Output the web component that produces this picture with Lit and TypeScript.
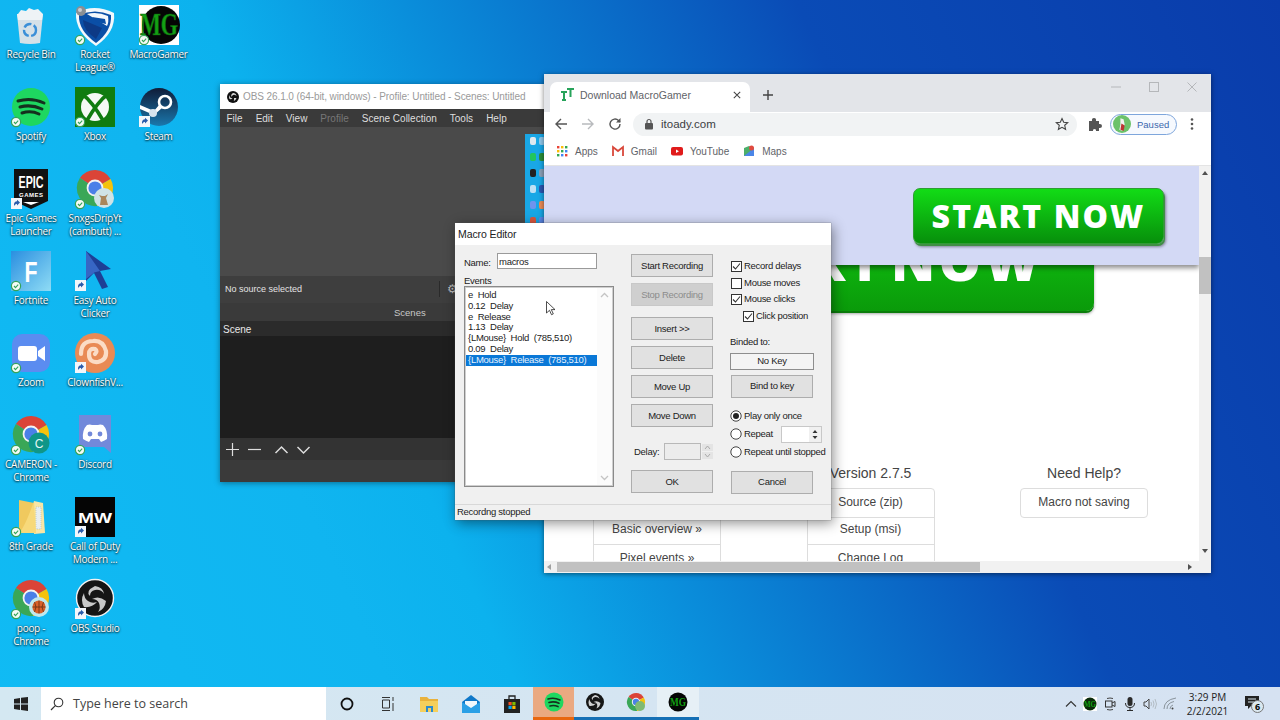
import { LitElement, html, css, svg } from 'lit';
import { customElement } from 'lit/decorators.js';

// overlays that windows puts on desktop icons
const check = () => svg`
  <circle cx="5" cy="35" r="4.6" fill="#f4fbf6" stroke="#35a35a" stroke-width="1.2"/>
  <path d="M3 35l1.500 1.600L7.200 33.600" fill="none" stroke="#35a35a" stroke-width="1.100"/>`;
const shortcut = () => svg`
  <rect x="0" y="29" width="11" height="11" fill="#f3f6fa"/>
  <path d="M3 38v-2.500q0-3 3-3.200V30.800l3 2.800-3 2.800v-1.700q-2 .2-3 2.300z" fill="#2a5cab"/>`;

const chrome = (extra: unknown) => svg`
  <g transform="translate(1 0)">
    <path d="M19 19L3.900 9A18 18 0 0 1 34.600 10z" fill="#db4437"/>
    <path d="M19 19L34.600 10A18 18 0 0 1 21 37z" fill="#f4c20d"/>
    <path d="M19 19L21 37A18 18 0 0 1 3.900 9z" fill="#3aa757"/>
    <circle cx="19" cy="19" r="8.400" fill="#f3f3f3"/>
    <circle cx="19" cy="19" r="6.600" fill="#4a80e8"/>
  </g>
  ${extra}`;

const ICONS: Record<string, () => unknown> = {
  bin: () => svg`
    <path d="M7 9l3-4 5 1 3-3 5 2 4-1 5 5-25 0z" fill="#eef3f6"/>
    <path d="M6 9l26 0-3 29q-10 2-20 0z" fill="#d5e1e8"/>
    <path d="M6 9l26 0-1 6-24 0z" fill="#eef3f6"/>
    <circle cx="19" cy="25" r="6" fill="none" stroke="#3a8fd8" stroke-width="2.400" stroke-dasharray="8 2.500"/>`,
  rocket: () => svg`
    <path d="M1 8q18-10 38 0 2 19-18 33Q0 27 1 8z" fill="#f4f8fb"/>
    <path d="M4 10q16-7 32 0 1 16-15 28Q3 25 4 10z" fill="#0b4fa6"/>
    <path d="M12 9q10-3 21 2 1 6-1 10L22 15z" fill="#f4f8fb"/>
    <path d="M8 15l19 8-6 11Q8 25 8 15z" fill="#0d3a86"/>
    <path d="M17 12l13 2 1 5-9-2z" fill="#0b4fa6"/>
    <circle cx="6" cy="6" r="5" fill="#8a8f94"/>
    <circle cx="5" cy="5" r="2" fill="#c9ccd0"/>
    ${check()}`,
  mg: () => svg`
    <rect width="40" height="40" fill="#fff"/>
    <circle cx="22" cy="20" r="19" fill="#050505"/>
    <text x="20" y="30" text-anchor="middle" font-family="Liberation Serif" font-weight="700" font-size="31" fill="#14a014" stroke="#0b5f0b" stroke-width=".7" textLength="38" lengthAdjust="spacingAndGlyphs">MG</text>
    ${check()}`,
  spotify: () => svg`
    <circle cx="20" cy="20" r="19" fill="#1ed760"/>
    <path d="M7 14q13-4 26 2M9 20q11-3 22 2M11 26q9-3 17 1" fill="none" stroke="#15301e" stroke-width="3" stroke-linecap="round"/>
    ${check()}`,
  xbox: () => svg`
    <rect width="40" height="40" fill="#107c10"/>
    <circle cx="20" cy="20" r="14" fill="#f5f9f5"/>
    <path d="M7 7Q17 14 29 35M33 7Q23 14 11 35" fill="none" stroke="#107c10" stroke-width="3.600"/>
    ${check()}`,
  steam: () => svg`
    <defs><linearGradient id="st" x1="0" y1="0" x2="0" y2="1"><stop offset="0" stop-color="#101c38"/><stop offset="1" stop-color="#1a78ad"/></linearGradient></defs>
    <circle cx="20" cy="20" r="19" fill="url(#st)"/>
    <circle cx="26" cy="15" r="6" fill="none" stroke="#fff" stroke-width="2.600"/>
    <path d="M1 22l14 6 8-7-3-3-5 6-14-6z" fill="#fff"/>
    <circle cx="14" cy="26" r="4" fill="#d7e4ee"/>
    ${shortcut()}`,
  epic: () => svg`
    <path d="M3 0h34v32L20 40 3 32z" fill="#111"/>
    <text x="20" y="19" text-anchor="middle" font-family="Liberation Sans" font-weight="700" font-size="17" fill="#fff" textLength="25" lengthAdjust="spacingAndGlyphs">EPIC</text>
    <text x="20" y="28" text-anchor="middle" font-family="Liberation Sans" font-weight="700" font-size="6" fill="#fff" textLength="24">GAMES</text>
    <path d="M12 33h16l-8 3z" fill="#fff"/>
    ${shortcut()}`,
  chromeDog: () => chrome(svg`
    <circle cx="29" cy="29" r="10" fill="#cfe3e6"/>
    <path d="M25 36l1-7-2-3 3 1 3 0 3-2-2 4 2 7z" fill="#a9865c"/>
    ${check()}`),
  fortnite: () => svg`
    <defs><linearGradient id="fn" x1="0" y1="0" x2="1" y2="1"><stop offset="0" stop-color="#2a8fe0"/><stop offset="1" stop-color="#8fdcf5"/></linearGradient></defs>
    <rect width="40" height="40" fill="url(#fn)"/>
    <text x="20" y="31" text-anchor="middle" font-family="Liberation Sans" font-weight="700" font-size="30" fill="#fff" textLength="13" lengthAdjust="spacingAndGlyphs">F</text>
    ${check()}`,
  clicker: () => svg`
    <path d="M11 0l25 18-11 2 8 16-6 2-8-16-8 8z" fill="#1e3f95"/>
    <path d="M11 0l14 20-8 2 3-1-9 7z" fill="#3766c4"/>
    ${shortcut()}`,
  zoom: () => svg`
    <rect x="1" y="1" width="38" height="38" rx="10" fill="#5b8cf0"/>
    <rect x="7" y="13" width="19" height="15" rx="3" fill="#fff"/>
    <path d="M27 18l7-5v15l-7-5z" fill="#fff"/>
    ${check()}`,
  clownfish: () => svg`
    <circle cx="20" cy="20" r="20" fill="#e98a55"/>
    <path d="M20 21q3-3 0-5-6-1-6 5 0 9 9 8 9-2 8-11-3-11-13-10Q6 8 6 21" fill="none" stroke="#fbdcc6" stroke-width="4.200" stroke-linecap="round"/>
    ${shortcut()}`,
  chromeC: () => chrome(svg`
    <circle cx="28" cy="28" r="10.500" fill="#0f9688"/>
    <text x="28" y="32.500" text-anchor="middle" font-family="Liberation Sans" font-size="12" fill="#e6f6f3">C</text>
    ${check()}`),
  discord: () => svg`
    <path d="M4 0h32v38l-7-6H4z" fill="#7289da"/>
    <path d="M8 24q-1-9 4-14 3-1 5 0h6q2-1 5 0 5 5 4 14-3 2-6 3l-2-3h-8l-2 3q-3-1-6-3z" fill="#fff"/>
    <circle cx="15" cy="19" r="2.400" fill="#7289da"/><circle cx="25" cy="19" r="2.400" fill="#7289da"/>
    ${check()}`,
  folder: () => svg`
    <path d="M8 3l15 3v30l-15 0z" fill="#f0c95e"/>
    <path d="M23 4l9 2 2 30-11 1z" fill="#f8e6a6"/>
    <path d="M25 10h5v22h-5z" fill="#e8eef0" stroke="#9bb0b8" stroke-width=".5" stroke-dasharray="1 1"/>
    <path d="M8 36q6-6 15-32l2 32z" fill="#f7d97a"/>
    ${check()}`,
  mw: () => svg`
    <rect width="40" height="40" fill="#050505"/>
    <text x="20" y="26" text-anchor="middle" font-family="Liberation Sans" font-weight="700" font-size="15" fill="#fff" textLength="34" lengthAdjust="spacingAndGlyphs">MW</text>
    ${shortcut()}`,
  chromeBall: () => chrome(svg`
    <circle cx="28" cy="28" r="10" fill="#bfe8ee"/>
    <circle cx="28" cy="28" r="6.600" fill="#d9622b"/>
    <path d="M28 21.500v13M21.500 28h13M23.500 23q3 5 0 10M32.500 23q-3 5 0 10" fill="none" stroke="#5a2a10" stroke-width=".7"/>
    ${check()}`),
  obs: () => svg`
    <circle cx="20" cy="19" r="18.500" fill="#151515" stroke="#f2f2f2" stroke-width="1.400"/>
    <path d="M20 7q8 1 9 8-3-5-9-4-5 1-5 6-5-5 5-10zM31 22q-1 8-8 11 3-4 1-9-2-4-7-4 7-4 14 2zM9 28q-4-7 0-14 0 5 4 8 4 3 9 1-5 6-13 5z" fill="#c8c8c8"/>
    ${shortcut()}`,
};

const DESKTOP: { icon: string; label: string[] }[] = [
  { icon: 'bin', label: ['Recycle Bin'] },
  { icon: 'spotify', label: ['Spotify'] },
  { icon: 'epic', label: ['Epic Games', 'Launcher'] },
  { icon: 'fortnite', label: ['Fortnite'] },
  { icon: 'zoom', label: ['Zoom'] },
  { icon: 'chromeC', label: ['CAMERON -', 'Chrome'] },
  { icon: 'folder', label: ['8th Grade'] },
  { icon: 'chromeBall', label: ['poop -', 'Chrome'] },
  { icon: 'rocket', label: ['Rocket', 'League®'] },
  { icon: 'xbox', label: ['Xbox'] },
  { icon: 'chromeDog', label: ['SnxgsDripYt', '(cambutt) ...'] },
  { icon: 'clicker', label: ['Easy Auto', 'Clicker'] },
  { icon: 'clownfish', label: ['ClownfishV...'] },
  { icon: 'discord', label: ['Discord'] },
  { icon: 'mw', label: ['Call of Duty', 'Modern ...'] },
  { icon: 'obs', label: ['OBS Studio'] },
  { icon: 'mg', label: ['MacroGamer'] },
  { icon: 'steam', label: ['Steam'] },
];

const EVENTS = ['e  Hold', '0.12  Delay', 'e  Release', '1.13  Delay', '{LMouse}  Hold  (785,510)', '0.09  Delay', '{LMouse}  Release  (785,510)'];

// mini desktop that the OBS preview is showing, two columns per row
const MINI = ['#dfe9f0', '#8fc7ea', '#22c55e', '#2a8f3a', '#222', '#8aa0b8', '#bfe0f5', '#2a56b0', '#6f94ee', '#e98a55', '#d9573f', '#5b8cf0'];

@customElement('app-root')
export class AppRoot extends LitElement {
  static styles = css`
    :host {
      display: block;
      width: 1280px;
      height: 720px;
      overflow: hidden;
      font-family: 'Liberation Sans', Arial, sans-serif;
    }
    .desktop {
      position: relative;
      width: 1280px;
      height: 720px;
      overflow: hidden;
      background: linear-gradient(65deg, #10bbf4 0%, #10b5f0 25%, #0cb2ee 33%, #0a90dc 45%, #0a6cc8 58%, #0a4bb6 70%, #0a3cab 100%);
    }
    svg { display: block; }

    /* desktop icons */
    .icons {
      display: grid;
      grid-auto-flow: column;
      grid-template-rows: repeat(8, 82px);
      grid-template-columns: 62px 66px 61px;
      padding-top: 5px;
      width: 189px;
    }
    .dicon {
      display: flex;
      flex-direction: column;
      align-items: center;
    }
    .dicon svg { width: 40px; height: 40px; overflow: visible; }
    .dicon .label {
      margin-top: 3px;
      color: #fff;
      font: 10px/13px 'Open Sans', sans-serif;
      letter-spacing: -0.3px;
      text-align: center;
      white-space: nowrap;
      text-shadow: 0 1px 2px rgba(0, 0, 0, 0.8), 0 0 2px rgba(0, 0, 0, 0.6);
    }

    /* OBS */
    .obs {
      position: absolute;
      left: 220px;
      top: 84px;
      width: 326px;
      height: 398px;
      display: flex;
      flex-direction: column;
      background: #3a3a3a;
      box-shadow: 0 1px 6px rgba(0, 0, 0, 0.4);
      color: #dedede;
    }
    .obs-title {
      height: 25px;
      background: #fff;
      color: #9a9a9a;
      font-size: 10px;
      letter-spacing: -0.09px;
      display: flex;
      align-items: center;
      gap: 4px;
      padding-left: 7px;
      white-space: nowrap;
    }
    .obs-title svg { width: 12px; height: 12px; }
    .obs-menu {
      height: 18px;
      background: #3a3a3a;
      display: flex;
      align-items: center;
      padding-left: 6.5px;
      gap: 13px;
      font-size: 10px;
    }
    .obs-menu .off { color: #777; }
    .preview {
      position: relative;
      height: 149px;
      background: #4a4a4a;
    }
    .mini {
      position: absolute;
      right: 2px;
      top: 7px;
      width: 19px;
      height: 105px;
      background: #19a7e6;
      display: grid;
      grid-template-columns: 9px 9px;
      grid-auto-rows: 16px;
      padding: 3px 0 0 3px;
      box-sizing: border-box;
      justify-items: center;
    }
    .mini i { width: 6px; height: 8px; border-radius: 2px; }
    .sel-bar {
      height: 27px;
      background: #3e3e3e;
      display: flex;
      align-items: center;
      padding: 0 0 1px 5px;
      box-sizing: border-box;
      font-size: 9px;
      color: #e4e4e4;
    }
    .sel-bar .txt { width: 214px; }
    .sel-bar .sep { width: 1px; height: 16px; background: #2a2a2a; }
    .sel-bar .gear { color: #bbb; font-size: 12px; margin-left: 7px; }
    .scenes-head {
      height: 18px;
      background: #3a3a3a;
      display: flex;
      align-items: center;
      padding-left: 174px;
      font-size: 9.5px;
      color: #c8c8c8;
    }
    .scene-row {
      height: 15px;
      background: #2b2b2b;
      display: flex;
      align-items: center;
      padding: 1px 0 0 3px;
      box-sizing: border-box;
      font-size: 10px;
      color: #e8e8e8;
    }
    .scene-list { flex: 1; background: #1e1e1e; }
    .obs-tools {
      height: 22px;
      background: #333;
      display: flex;
      align-items: center;
      padding-left: 5px;
      gap: 7px;
    }
    .obs-tools svg { width: 15px; height: 15px; }
    .obs-tools .nudge { margin-left: 5px; }
    .obs-foot { height: 22px; background: #3a3a3a; }

    /* browser */
    .browser {
      position: absolute;
      left: 544px;
      top: 74px;
      width: 667px;
      height: 499px;
      display: flex;
      flex-direction: column;
      background: #fff;
      box-shadow: 0 1px 5px rgba(0, 0, 0, 0.5);
    }
    .tabs {
      height: 38px;
      background: #e3e5e9;
      display: flex;
      align-items: flex-end;
      padding-left: 6px;
      position: relative;
      box-sizing: border-box;
    }
    .tab {
      width: 200px;
      height: 30px;
      background: #fff;
      border-radius: 7px 7px 0 0;
      display: flex;
      align-items: center;
      padding: 0 7px 5px 10px;
      box-sizing: border-box;
      gap: 5px;
      font-size: 10.5px;
      color: #5f6368;
    }
    .tab .grow { flex: 1; white-space: nowrap; }
    .tab svg { width: 15px; height: 15px; }
    .tab svg.x { width: 12px; height: 12px; }
    .newtab { margin: 0 0 11px 12px; width: 12px; height: 12px; }
    .winctl {
      position: absolute;
      right: 0;
      top: 4px;
      display: flex;
    }
    .winctl svg { width: 38px; height: 18px; }
    .toolbar {
      height: 26px;
      display: flex;
      align-items: center;
      padding: 0 0 2px 10px;
      box-sizing: border-box;
      background: #fff;
    }
    .toolbar .nav { width: 14px; height: 14px; margin-right: 13px; }
    .omni {
      width: 444px;
      height: 23px;
      margin-left: -2px;
      border-radius: 12px;
      background: #f1f3f4;
      display: flex;
      align-items: center;
      padding: 0 8px 0 11px;
      box-sizing: border-box;
      gap: 7px;
      font-size: 11.5px;
      color: #3c4043;
    }
    .omni .grow { flex: 1; }
    .omni svg { width: 10px; height: 12px; }
    .omni svg.star { width: 14px; height: 14px; }
    .puzzle { width: 14px; height: 14px; margin-left: 11px; }
    .paused {
      margin-left: 8px;
      width: 67px;
      height: 21px;
      border: 1px solid #7ea6dc;
      border-radius: 11px;
      box-sizing: border-box;
      display: flex;
      align-items: center;
      gap: 6px;
      padding-left: 2px;
      font-size: 9.5px;
      color: #3b68ad;
      background: #f6f9fe;
    }
    .paused svg { width: 18px; height: 18px; }
    .kebab { width: 4px; height: 14px; margin-left: 13px; }
    .bookmarks {
      height: 28px;
      display: flex;
      align-items: center;
      padding: 0 0 1px 12px;
      font-size: 10px;
      color: #5f6368;
      border-bottom: 1px solid #e4e4e4;
      box-sizing: border-box;
    }
    .bookmarks svg { width: 12px; height: 12px; margin-right: 7px; }
    .bookmarks span { margin-right: 14px; }
    .page-wrap { flex: 1; display: flex; min-height: 0; }
    .page {
      position: relative;
      flex: 1;
      overflow: hidden;
      background: #fff;
      display: flex;
      flex-direction: column;
    }
    .vbar {
      width: 12px;
      background: #f1f1f1;
      display: flex;
      flex-direction: column;
      align-items: center;
    }
    .vbar .thumb { width: 12px; height: 37px; margin-top: 82px; background: #c1c1c1; }
    .vbar .grow { flex: 1; }
    .ar { width: 0; height: 0; border: 3px solid transparent; }
    .ar.up { border-bottom: 4px solid #505050; border-top: 0; margin-top: 5px; }
    .ar.down { border-top: 4px solid #505050; border-bottom: 0; margin-bottom: 8px; }
    .ar.left { border-right: 4px solid #a0a0a0; border-left: 0; }
    .ar.right { border-left: 4px solid #505050; border-right: 0; }
    .hbar {
      height: 12px;
      background: #f1f1f1;
      display: flex;
      align-items: center;
      padding: 0 19px 0 3px;
    }
    .hbar .thumb { width: 423px; height: 10px; margin-left: 6px; background: #c1c1c1; }
    .hbar .grow { flex: 1; }
    .hero {
      width: 504px;
      height: 116px;
      margin: 29px 0 0 46px;
      flex: none;
      box-sizing: border-box;
      border-radius: 8px;
      background: linear-gradient(#14d514, #0a9a0a);
      box-shadow: 0 2px 0 #0b7d0b, 0 3px 3px rgba(0, 0, 0, 0.35);
      display: flex;
      justify-content: flex-end;
      align-items: flex-end;
      padding: 0 51px 24px 0;
      color: #fff;
      font: 800 53px/1 'Open Sans', sans-serif;
      letter-spacing: 3.5px;
      word-spacing: -10px;
      white-space: nowrap;
    }
    .overlay {
      position: absolute;
      left: 0;
      right: 0;
      top: 0;
      height: 99px;
      background: #d3d9f5;
      box-shadow: 0 3px 5px rgba(0, 0, 0, 0.45);
    }
    .start {
      position: absolute;
      left: 369px;
      top: 22px;
      width: 251px;
      height: 56px;
      box-sizing: border-box;
      border: 1px solid #2f9d33;
      border-radius: 7px;
      background: linear-gradient(#12dc16, #078f0b);
      box-shadow: 1px 2px 0 #3f8f44, 2px 3px 3px rgba(0, 0, 0, 0.4);
      display: flex;
      align-items: center;
      justify-content: center;
      color: #fff;
      font: 800 32px/1 'Open Sans', sans-serif;
      letter-spacing: 2.1px;
    }
    .cols { display: flex; padding-left: 49px; margin-top: 154px; color: #444; }
    .col { width: 128px; text-align: center; font-size: 12px; }
    .col + .col { margin-left: 85.5px; }
    .col h4 { margin: 0 0 7px; height: 16px; font: 400 14px/16px 'Liberation Sans', sans-serif; }
    .group { border: 1px solid #ddd; border-radius: 4px; }
    .group div { height: 26px; line-height: 26px; border-top: 1px solid #ddd; }
    .group div:first-child { height: 28px; line-height: 26px; border-top: 0; }
    .group div:nth-child(2) { line-height: 23px; }

    /* Macro Editor dialog */
    .dialog {
      position: absolute;
      left: 455px;
      top: 223px;
      width: 376px;
      height: 297px;
      display: flex;
      flex-direction: column;
      background: #f0f0f0;
      box-shadow: 0 0 1px #555, 2px 3px 12px rgba(0, 0, 0, 0.45);
      font: 9.5px/13px 'Liberation Sans', sans-serif;
      letter-spacing: -0.28px;
      color: #222;
    }
    .dlg-title {
      height: 22px;
      background: #fff;
      padding-left: 3px;
      font-size: 10.5px;
      letter-spacing: -0.1px;
      line-height: 22px;
    }
    .dlg-body { flex: 1; display: flex; padding-left: 9px; }
    .dlg-left { width: 150px; }
    .name { display: flex; align-items: center; margin-top: 8px; height: 16px; }
    .name span { width: 33px; padding-top: 2px; }
    .name .input {
      width: 100px;
      height: 16px;
      box-sizing: border-box;
      border: 1px solid #9a9a9a;
      background: #fff;
      padding-left: 1px;
      line-height: 15px;
    }
    .ev-label { margin-top: 5px; height: 12px; }
    .list {
      height: 201px;
      box-sizing: border-box;
      border: 1px solid #8a8a8a;
      padding: 1px;
      display: flex;
      background: #fff;
      box-shadow: inset 0 0 0 1px #cfcfcf;
    }
    .items { flex: 1; padding: 2px 0 0; }
    .items div { height: 10.8px; line-height: 10.8px; padding-left: 2px; white-space: pre; }
    .items .on { background: #0a78d7; color: #e6f2ff; }
    .sb { width: 15px; padding: 4px 0; display: flex; flex-direction: column; justify-content: space-between; align-items: center; background: #fbfbfb; }
    .sb svg { width: 9px; height: 6px; }
    .dlg-mid { margin-left: 17px; width: 82px; padding-top: 9px; }
    .btn {
      height: 23px;
      box-sizing: border-box;
      background: #e1e1e1;
      border: 1px solid #adadad;
      padding-bottom: 1px;
      display: flex;
      align-items: center;
      justify-content: center;
      white-space: nowrap;
    }
    .btn.dis { background: #cfcfcf; border-color: #c8c8c8; color: #8c8c8c; }
    .btn + .btn { margin-top: 6px; }
    .btn.l { margin-top: 11px; }
    .delay { display: flex; align-items: center; height: 17px; margin: 16px 0 10px; white-space: nowrap; }
    .delay .lbl { margin-left: 3px; width: 30px; }
    .delay .field { width: 37px; height: 17px; box-sizing: border-box; border: 1px solid #b8b8b8; background: #ececec; }
    .delay .spin { width: 11px; margin-left: 1px; display: flex; flex-direction: column; gap: 1px; }
    .delay .spin svg { width: 11px; height: 7px; }
    .dlg-right { margin-left: 17px; width: 100px; padding-top: 13px; }
    .chk { display: flex; align-items: center; height: 16.7px; gap: 2px; padding-left: 1px; white-space: nowrap; }
    .chk.sub { padding-left: 13px; }
    .chk svg { width: 11px; height: 11px; flex: none; }
    .chk span, .rad span { margin-bottom: 2px; }
    .bind-l { margin-top: 10px; height: 14px; }
    .nokey {
      width: 84px;
      height: 17px;
      margin-top: 4px;
      box-sizing: border-box;
      border: 1px solid #8e8e8e;
      background: #f4f4f4;
      text-align: center;
      line-height: 14px;
    }
    .bindkey { width: 82px; margin: 5px 0 0 1px; }
    .radios { margin-top: 9.5px; }
    .rad { display: flex; align-items: center; height: 18px; gap: 2px; white-space: nowrap; }
    .rad svg { width: 12px; height: 12px; flex: none; }
    .rspin { display: flex; margin-left: 6px; width: 41px; height: 17px; box-sizing: border-box; border: 1px solid #c8c8c8; background: #fff; }
    .rspin .f { flex: 1; }
    .rspin svg { width: 12px; height: 15px; background: #f0f0f0; }
    .cancel { width: 82px; margin: 9.5px 0 0 1px; }
    .status {
      height: 15px;
      border-top: 1px solid #d8d8d8;
      padding-left: 2px;
      line-height: 14px;
    }
    .cursor { position: absolute; left: 546px; top: 301px; width: 9px; height: 15px; }

    /* taskbar */
    .taskbar {
      position: absolute;
      left: 0;
      right: 0;
      bottom: 0;
      height: 33px;
      background: linear-gradient(90deg, #d4e8f2, #d6e2f2);
      display: flex;
      align-items: stretch;
    }
    .start-btn { width: 41px; display: flex; align-items: center; justify-content: center; }
    .start-btn svg { width: 14px; height: 14px; }
    .search {
      width: 285px;
      background: #fff;
      display: flex;
      align-items: center;
      padding-left: 9px;
      box-sizing: border-box;
      gap: 9px;
      font: 12.5px 'Open Sans', sans-serif;
      color: #444;
    }
    .search svg { width: 14px; height: 14px; }
    .tb {
      width: 41.4px;
      box-sizing: border-box;
      display: flex;
      align-items: center;
      justify-content: center;
      border-bottom: 3px solid transparent;
    }
    .tb svg { width: 20px; height: 20px; }
    .tb.plain { border-bottom: 0; }
    .tb.run { border-bottom-color: #1670b5; }
    .tb.hot { background: #eaa981; border-bottom-color: #e8670f; }
    .tb.lit { background: #e6f0f6; border-bottom-color: #1670b5; }
    .tray { margin-left: auto; display: flex; align-items: center; }
    .tray .ti { width: 19.9px; display: flex; justify-content: center; }
    .tray svg { width: 14px; height: 14px; }
    .clock { align-self: center; width: 55px; text-align: center; font: 10px/14px 'Open Sans', sans-serif; color: #222; }
    .notif { align-self: center; width: 35px; height: 20px; position: relative; }
    .notif svg { width: 14px; height: 14px; margin: 2px 0 0 10px; }
    .notif b {
      position: absolute;
      left: 16px;
      top: 6px;
      width: 13px;
      height: 13px;
      border-radius: 50%;
      border: 1px solid #777;
      box-sizing: border-box;
      background: #dbe8f0;
      font: 700 9px/11px 'Open Sans', sans-serif;
      text-align: center;
    }
    .show { width: 10px; }
  `;

  private renderDesktopIcon(item: { icon: string; label: string[] }) {
    return html`<div class="dicon">
      <svg viewBox="0 0 40 40">${ICONS[item.icon]()}</svg>
      <div class="label">${item.label.map((l) => html`<div>${l}</div>`)}</div>
    </div>`;
  }

  private renderObs() {
    return html`<section class="obs">
      <div class="obs-title">
        <svg viewBox="0 0 12 12"><circle cx="6" cy="6" r="6" fill="#111"/><path d="M6 2q3 0 3.500 3-2-2-3.500-1-1.500 1-1 2-2-2 1-4zM9.500 7q-1 3-3 3 1-1 .5-3zM2.500 8q-1-2 0-4 0 3 3 3.500-1 1-3 .5z" fill="#ddd"/></svg>
        OBS 26.1.0 (64-bit, windows) - Profile: Untitled - Scenes: Untitled
      </div>
      <div class="obs-menu">
        <span>File</span><span>Edit</span><span>View</span><span class="off">Profile</span><span>Scene Collection</span><span>Tools</span><span>Help</span>
      </div>
      <div class="preview">
        <div class="mini">${MINI.map((c) => html`<i style="background:${c}"></i>`)}</div>
      </div>
      <div class="sel-bar"><span class="txt">No source selected</span><span class="sep"></span><span class="gear">⚙</span></div>
      <div class="scenes-head">Scenes</div>
      <div class="scene-row">Scene</div>
      <div class="scene-list"></div>
      <div class="obs-tools">
        <svg viewBox="0 0 15 15"><path d="M1 7.500h13M7.500 1v13" stroke="#ddd" stroke-width="1.200"/></svg>
        <svg viewBox="0 0 15 15"><path d="M1 7.500h13" stroke="#ddd" stroke-width="1.200"/></svg>
        <svg class="nudge" viewBox="0 0 15 15"><path d="M1.500 11l6-6 6 6" fill="none" stroke="#ddd" stroke-width="1.500"/></svg>
        <svg viewBox="0 0 15 15"><path d="M1.500 5l6 6 6-6" fill="none" stroke="#ddd" stroke-width="1.500"/></svg>
      </div>
      <div class="obs-foot"></div>
    </section>`;
  }

  private renderBrowser() {
    return html`<section class="browser">
      <div class="tabs">
        <div class="tab">
          <svg viewBox="0 0 15 15"><path d="M1 5h6M4 5v8M2 13h4M7 2h7M10.500 2v8" fill="none" stroke="#27a35a" stroke-width="2"/></svg>
          <span class="grow">Download MacroGamer</span>
          <svg class="x" viewBox="0 0 15 15"><path d="M3.500 3.500l8 8M11.500 3.500l-8 8" stroke="#444" stroke-width="1.300"/></svg>
        </div>
        <svg class="newtab" viewBox="0 0 12 12"><path d="M6 1v10M1 6h10" stroke="#444" stroke-width="1.400"/></svg>
        <div class="winctl">
          <svg viewBox="0 0 38 18"><path d="M14 9h10" stroke="#b5b7ba"/></svg>
          <svg viewBox="0 0 38 18"><rect x="14.500" y="4.500" width="9" height="9" fill="none" stroke="#b5b7ba"/></svg>
          <svg viewBox="0 0 38 18"><path d="M14.500 4.500l9 9M23.500 4.500l-9 9" stroke="#b5b7ba"/></svg>
        </div>
      </div>
      <div class="toolbar">
        <svg class="nav" viewBox="0 0 14 14"><path d="M13 7H2M7 2L2 7l5 5" fill="none" stroke="#555" stroke-width="1.400"/></svg>
        <svg class="nav" viewBox="0 0 14 14"><path d="M1 7h11M7 2l5 5-5 5" fill="none" stroke="#b8babd" stroke-width="1.400"/></svg>
        <svg class="nav" viewBox="0 0 14 14"><path d="M12 7a5 5 0 1 1-1.500-3.500L12 5" fill="none" stroke="#555" stroke-width="1.400"/><path d="M12.500 1v4.500H8z" fill="#555"/></svg>
        <div class="omni">
          <svg viewBox="0 0 10 12"><rect x="1" y="5" width="8" height="6.500" rx="1" fill="#555"/><path d="M3 5V3.500a2 2 0 0 1 4 0V5" fill="none" stroke="#555" stroke-width="1.200"/></svg>
          <span class="grow">itoady.com</span>
          <svg class="star" viewBox="0 0 14 14"><path d="M7 1.500l1.700 3.700 4 .4-3 2.700.9 4L7 10.300l-3.600 2 .9-4-3-2.700 4-.4z" fill="none" stroke="#444" stroke-width="1.100"/></svg>
        </div>
        <svg class="puzzle" viewBox="0 0 14 14"><path d="M1 4h3q-.5-3 2-3t2 3h3v3q3-.5 3 2t-3 2v3H8q.5-2-1.500-2T5 14H1z" fill="#555"/></svg>
        <div class="paused">
          <svg viewBox="0 0 17 17"><circle cx="8.500" cy="8.500" r="8.500" fill="#6cc26a"/><path d="M7 3l3 1 1 5-2 6-3-1 1-5z" fill="#f0f0f0"/><path d="M8 8l3 2-1 5-3-1z" fill="#b33"/></svg>
          Paused
        </div>
        <svg class="kebab" viewBox="0 0 4 14"><circle cx="2" cy="2.500" r="1.300" fill="#555"/><circle cx="2" cy="7" r="1.300" fill="#555"/><circle cx="2" cy="11.500" r="1.300" fill="#555"/></svg>
      </div>
      <div class="bookmarks">
        <svg viewBox="0 0 12 12">
          ${[1, 5, 9].map((y, r) => [1, 5, 9].map((x, c) => svg`<rect x="${x}" y="${y}" width="2.400" height="2.400" fill="${['#ea4335', '#fbbc05', '#34a853', '#4285f4'][(r + c) % 4]}"/>`))}
        </svg>
        <span>Apps</span>
        <svg viewBox="0 0 12 12"><path d="M1 11V2l5 4 5-4v9" fill="none" stroke="#d9483b" stroke-width="1.800"/></svg>
        <span>Gmail</span>
        <svg viewBox="0 0 12 12"><rect x="0" y="2" width="12" height="8.500" rx="2" fill="#e01b1b"/><path d="M5 4.500l3 1.700-3 1.700z" fill="#fff"/></svg>
        <span>YouTube</span>
        <svg viewBox="0 0 12 12"><path d="M1 3l5-2 5 2v8l-5 0-5 0z" fill="#4caf6a"/><path d="M1 11l10-8v8z" fill="#4a86e8"/><circle cx="8.500" cy="3" r="2.500" fill="#e04a3f"/></svg>
        <span>Maps</span>
      </div>
      <div class="page-wrap">
        <div class="page">
          <div class="hero">START NOW</div>
          <div class="cols">
            <div class="col">
              <h4></h4>
              <div class="group"><div></div><div>Basic overview »</div><div>Pixel events »</div></div>
            </div>
            <div class="col">
              <h4>Version 2.7.5</h4>
              <div class="group"><div>Source (zip)</div><div>Setup (msi)</div><div>Change Log</div></div>
            </div>
            <div class="col">
              <h4>Need Help?</h4>
              <div class="group"><div>Macro not saving</div></div>
            </div>
          </div>
          <div class="overlay"><div class="start">START NOW</div></div>
        </div>
        <div class="vbar">
          <i class="ar up"></i>
          <div class="thumb"></div>
          <div class="grow"></div>
          <i class="ar down"></i>
        </div>
      </div>
      <div class="hbar">
        <i class="ar left"></i>
        <div class="thumb"></div>
        <div class="grow"></div>
        <i class="ar right"></i>
      </div>
    </section>`;
  }

  private box(on: boolean) {
    return html`<svg viewBox="0 0 11 11">
      <rect x=".5" y=".5" width="10" height="10" fill="#fff" stroke="#333"/>
      ${on ? svg`<path d="M2 5.500l2.500 2.500L9 2.500" fill="none" stroke="#333" stroke-width="1.100"/>` : ''}
    </svg>`;
  }

  private radio(on: boolean) {
    return html`<svg viewBox="0 0 12 12">
      <circle cx="6" cy="6" r="5.200" fill="#fff" stroke="#444"/>
      ${on ? svg`<circle cx="6" cy="6" r="3" fill="#222"/>` : ''}
    </svg>`;
  }

  private renderDialog() {
    return html`<section class="dialog">
      <div class="dlg-title">Macro Editor</div>
      <div class="dlg-body">
        <div class="dlg-left">
          <div class="name"><span>Name:</span><div class="input">macros</div></div>
          <div class="ev-label">Events</div>
          <div class="list">
            <div class="items">
              ${EVENTS.map((e, i) => html`<div class="${i === 6 ? 'on' : ''}">${e}</div>`)}
            </div>
            <div class="sb">
              <svg viewBox="0 0 9 6"><path d="M1 5l3.500-3.500L8 5" fill="none" stroke="#c4c4c4" stroke-width="1.300"/></svg>
              <svg viewBox="0 0 9 6"><path d="M1 1l3.500 3.500L8 1" fill="none" stroke="#c4c4c4" stroke-width="1.300"/></svg>
            </div>
          </div>
        </div>
        <div class="dlg-mid">
          <div class="btn">Start Recording</div>
          <div class="btn dis">Stop Recording</div>
          <div class="btn l">Insert &gt;&gt;</div>
          <div class="btn">Delete</div>
          <div class="btn">Move Up</div>
          <div class="btn">Move Down</div>
          <div class="delay">
            <span class="lbl">Delay:</span>
            <div class="field"></div>
            <div class="spin">
              <svg viewBox="0 0 11 7"><rect width="11" height="7" fill="#e4e4e4"/><path d="M3 5l2.500-3L8 5" fill="none" stroke="#aaa"/></svg>
              <svg viewBox="0 0 11 7"><rect width="11" height="7" fill="#e4e4e4"/><path d="M3 2l2.500 3L8 2" fill="none" stroke="#aaa"/></svg>
            </div>
          </div>
          <div class="btn">OK</div>
        </div>
        <div class="dlg-right">
          <div class="chk">${this.box(true)}<span>Record delays</span></div>
          <div class="chk">${this.box(false)}<span>Mouse moves</span></div>
          <div class="chk">${this.box(true)}<span>Mouse clicks</span></div>
          <div class="chk sub">${this.box(true)}<span>Click position</span></div>
          <div class="bind-l">Binded to:</div>
          <div class="nokey">No Key</div>
          <div class="btn bindkey">Bind to key</div>
          <div class="radios">
            <div class="rad">${this.radio(true)}<span>Play only once</span></div>
            <div class="rad">${this.radio(false)}<span>Repeat</span>
              <div class="rspin"><div class="f"></div>
                <svg viewBox="0 0 12 15"><path d="M3.500 6L6 3l2.500 3zM3.500 9L6 12l2.500-3z" fill="#333"/></svg>
              </div>
            </div>
            <div class="rad">${this.radio(false)}<span>Repeat until stopped</span></div>
          </div>
          <div class="btn cancel">Cancel</div>
        </div>
      </div>
      <div class="status">Recordng stopped</div>
    </section>`;
  }

  private renderTaskbar() {
    return html`<footer class="taskbar">
      <div class="start-btn"><svg viewBox="0 0 14 14"><path d="M0 2l6-1v5.500H0zM7 .8L14 0v6.500H7zM0 7.500h6V13l-6-1zM7 7.500h7V14l-7-1z" fill="#222"/></svg></div>
      <div class="search">
        <svg viewBox="0 0 14 14"><circle cx="8.500" cy="5.500" r="4.300" fill="none" stroke="#333" stroke-width="1.100"/><path d="M5.300 8.700L1 13" stroke="#333" stroke-width="1.200"/></svg>
        Type here to search
      </div>
      <div class="tb plain"><svg viewBox="0 0 20 20"><circle cx="10" cy="10" r="5.500" fill="none" stroke="#111" stroke-width="1.800"/></svg></div>
      <div class="tb plain"><svg viewBox="0 0 20 20"><path d="M4 3.500h8M4 16.500h8M15 3v4M15 9v8M4.500 6v8h7V6z" fill="none" stroke="#333"/></svg></div>
      <div class="tb plain"><svg viewBox="0 0 20 20"><path d="M1 3h7l2 2h9v3H1z" fill="#e9b23c"/><path d="M1 7h18v11H1z" fill="#f5cf5c"/><path d="M7 12h7v6h-2v-4H9v4H7z" fill="#2a8bd0"/></svg></div>
      <div class="tb plain"><svg viewBox="0 0 20 20"><path d="M1 8l9-7 9 7v11H1z" fill="#0f78c9"/><path d="M4 7h12v5l-6 4-6-4z" fill="#f2f8fc"/><path d="M1 8l9 6 9-6v11H1z" fill="#2ba0e6"/></svg></div>
      <div class="tb plain"><svg viewBox="0 0 20 20"><path d="M7 5V2h6v3" fill="none" stroke="#222" stroke-width="1.300"/><rect x="2" y="5" width="16" height="14" fill="#222"/><rect x="6.500" y="8" width="3.200" height="3.200" fill="#f25022"/><rect x="10.300" y="8" width="3.200" height="3.200" fill="#7fba00"/><rect x="6.500" y="11.800" width="3.200" height="3.200" fill="#00a4ef"/><rect x="10.300" y="11.800" width="3.200" height="3.200" fill="#ffb900"/></svg></div>
      <div class="tb hot"><svg viewBox="0 0 20 20"><circle cx="10" cy="10" r="9.500" fill="#1ed760"/><path d="M4 7q6-2 12 1M5 10.500q5-1.500 10 .7M6 14q4-1.200 8 .6" fill="none" stroke="#15301e" stroke-width="1.600" stroke-linecap="round"/></svg></div>
      <div class="tb run"><svg viewBox="0 0 20 20"><circle cx="10" cy="10" r="9" fill="#161616"/><path d="M10 3q4 .5 4.500 4-1.500-2.500-4.500-2-2.500.5-2.500 3-2.500-2.500 2.500-5zM15.500 11q-.5 4-4 5.500 1.500-2 .5-4.500-1-2-3.500-2 3.500-2 7 1zM4.500 14q-2-3.500 0-7 0 2.500 2 4t4.500.5q-2.500 3-6.500 2.500z" fill="#d0d0d0"/></svg></div>
      <div class="tb run"><svg viewBox="0 0 20 20"><path d="M10 10L2.500 5A9 9 0 0 1 17.800 5.500z" fill="#db4437"/><path d="M10 10L17.800 5.500A9 9 0 0 1 11 19z" fill="#f4c20d"/><path d="M10 10L11 19A9 9 0 0 1 2.500 5z" fill="#3aa757"/><circle cx="10" cy="10" r="4.200" fill="#f3f3f3"/><circle cx="10" cy="10" r="3.200" fill="#4a80e8"/><circle cx="14" cy="14" r="5" fill="#7fba72"/></svg></div>
      <div class="tb lit"><svg viewBox="0 0 20 20"><circle cx="10" cy="10" r="9.500" fill="#050505"/><text x="10" y="14" text-anchor="middle" font-family="Liberation Serif" font-weight="700" font-size="12" fill="#12a012" textLength="16" lengthAdjust="spacingAndGlyphs">MG</text></svg></div>
      <div class="tray">
        <div class="ti"><svg viewBox="0 0 14 14"><path d="M2 9.500l5-5 5 5" fill="none" stroke="#333" stroke-width="1.100"/></svg></div>
        <div class="ti"><svg viewBox="0 0 14 14"><rect width="14" height="14" fill="#fff"/><circle cx="7" cy="7" r="6.500" fill="#0a2a0a"/><text x="7" y="10" text-anchor="middle" font-family="Liberation Serif" font-weight="700" font-size="9" fill="#12a012" textLength="12" lengthAdjust="spacingAndGlyphs">MG</text></svg></div>
        <div class="ti"><svg viewBox="0 0 14 14"><path d="M4 1.500q3-1 6 0M4 12.500q3 1 6 0" fill="none" stroke="#444"/><rect x="2.500" y="4" width="6.500" height="6" fill="none" stroke="#333"/><path d="M9 6l3-1.500v5L9 8" fill="none" stroke="#333"/></svg></div>
        <div class="ti"><svg viewBox="0 0 14 14"><rect x="4.500" y="0" width="5" height="9" rx="2.500" fill="#2a2a2a"/><path d="M2.500 6q0 4.500 4.500 4.500T11.500 6M7 10.500V13M4 13.500h6" fill="none" stroke="#2a2a2a"/></svg></div>
        <div class="ti"><svg viewBox="0 0 14 14"><path d="M1 5h2l3-3v10l-3-3H1z" fill="none" stroke="#444"/><path d="M8 5q1 2 0 4M10 3.500q2 3.500 0 7M12 2q3 5 0 10" fill="none" stroke="#b3bcc4"/></svg></div>
        <div class="ti"><svg viewBox="0 0 14 14"><path d="M1 12q0-9 12-11M4 12q0-6 7-7.500M7 12q0-3 3-4" fill="none" stroke="#8a949c"/><circle cx="9.500" cy="11.500" r="1" fill="#444"/></svg></div>
      </div>
      <div class="clock"><div>3:29 PM</div><div>2/2/2021</div></div>
      <div class="notif">
        <svg viewBox="0 0 14 14"><path d="M0 0h14v10H6l-3 3v-3H0z" fill="#222"/><path d="M3 3h8M3 6h8" stroke="#dbe8f0"/></svg>
        <b>6</b>
      </div>
      <div class="show"></div>
    </footer>`;
  }

  render() {
    return html`<main class="desktop">
      <div class="icons">${DESKTOP.map((d) => this.renderDesktopIcon(d))}</div>
      ${this.renderObs()}
      ${this.renderBrowser()}
      ${this.renderDialog()}
      <svg class="cursor" viewBox="0 0 9 15"><path d="M.5.5v11.500l3-2.700 2 4.400 1.800-.8-2-4.300h3.700z" fill="#fff" stroke="#222" stroke-width=".8"/></svg>
      ${this.renderTaskbar()}
    </main>`;
  }
}
